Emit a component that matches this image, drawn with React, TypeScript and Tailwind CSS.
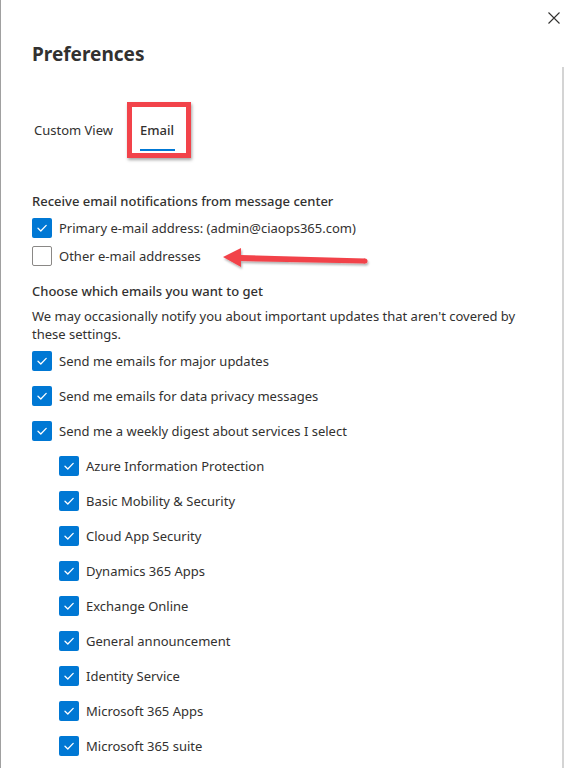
import React from 'react';

const font = { fontFamily: '"Segoe UI", "Noto Sans", "Open Sans", sans-serif' };

// Fluent-style square checkbox
const Check = ({ checked }: { checked: boolean }) => (
  <span
    className={`flex h-[20px] w-[20px] shrink-0 items-center justify-center rounded-[2px] ${
      checked ? 'bg-[#0078d4]' : 'border border-[#8a8886] bg-white'
    }`}
  >
    {checked && (
      <svg width="14" height="14" viewBox="0 0 14 14" fill="none">
        <path d="M3 7.3 L5.8 10 L11.2 4.4" stroke="#fff" strokeWidth="1.3" strokeLinecap="round" strokeLinejoin="round" />
      </svg>
    )}
  </span>
);

const Row = ({ label, checked = true, h = 'h-[35px]', indent = false }: { label: string; checked?: boolean; h?: string; indent?: boolean }) => (
  <div className={`flex items-center gap-[7px] ${h} ${indent ? 'pl-[27px]' : ''}`}>
    <Check checked={checked} />
    <span className="text-[13px] leading-[20px] text-[#323130]">{label}</span>
  </div>
);

const services = [
  'Azure Information Protection',
  'Basic Mobility & Security',
  'Cloud App Security',
  'Dynamics 365 Apps',
  'Exchange Online',
  'General announcement',
  'Identity Service',
  'Microsoft 365 Apps',
  'Microsoft 365 suite',
];

export default function App() {
  return (
    <div className="relative h-[768px] w-[564px] overflow-hidden border-l border-[#a0a0a0] bg-white" style={font}>
      {/* close */}
      <div className="flex justify-end pr-[4px] pt-[12px]">
        <svg width="12" height="12" viewBox="0 0 12 12">
          <path d="M0.5 0.5 L11.5 11.5 M11.5 0.5 L0.5 11.5" stroke="#323130" strokeWidth="1.1" />
        </svg>
      </div>

      <div className="pl-[31px]">
        <h1 className="mt-[16px] text-[19px] font-bold leading-[28px] text-[#323130]">Preferences</h1>

        {/* tabs */}
        <div className="mt-[40px] flex">
          <div className="w-[108px] pl-[2px] pt-[12px] pb-[11px] text-[13px] leading-[20px] text-[#323130]">Custom View</div>
          <div className="relative">
            <div className="pt-[12px] pb-[9px] text-[13px] font-medium leading-[20px] text-[#323130]">Email</div>
            <div className="h-[2px] w-[35px] bg-[#0078d4]" />
            <div className="absolute left-[-13px] top-[-6px] h-[56px] w-[64px] border-[5px] border-[#f2434a] shadow-[1px_2px_3px_rgba(0,0,0,0.35)]" />
          </div>
        </div>

        <div className="mt-[40px] text-[13px] font-medium leading-[20px] text-[#323130]">
          Receive email notifications from message center
        </div>
        <div className="mt-[3px]">
          <Row label="Primary e-mail address: (admin@ciaops365.com)" h="h-[28px]" />
          <Row label="Other e-mail addresses" checked={false} h="h-[28px]" />
        </div>

        <div className="mt-[11px] text-[13px] font-medium leading-[20px] text-[#323130]">
          Choose which emails you want to get
        </div>
        <p className="mt-[6px] text-[13px] leading-[18px] text-[#323130]">
          We may occasionally notify you about important updates that aren't covered by
          <br />
          these settings.
        </p>

        <div>
          <Row label="Send me emails for major updates" />
          <Row label="Send me emails for data privacy messages" />
          <Row label="Send me a weekly digest about services I select" />
          {services.map((s) => (
            <Row key={s} label={s} indent />
          ))}
        </div>
      </div>

      {/* annotation arrow */}
      <svg className="absolute left-[220px] top-[246px]" width="152" height="26" viewBox="0 0 152 26">
        <defs>
          <filter id="sh" x="-10%" y="-40%" width="120%" height="180%">
            <feDropShadow dx="1" dy="2" stdDeviation="1.2" floodColor="#000" floodOpacity="0.3" />
          </filter>
        </defs>
        <g filter="url(#sh)">
          <path d="M2 11 L20 2 L20 9 L144 12.5 L144 17.5 L20 15 L20 21 Z" fill="#f2434a" />
          <circle cx="144" cy="15" r="2.5" fill="#f2434a" />
        </g>
      </svg>

      {/* scrollbar track */}
      <div className="absolute right-0 top-[67px] bottom-0 w-[2px] bg-[#d4d4d4]" />
    </div>
  );
}
